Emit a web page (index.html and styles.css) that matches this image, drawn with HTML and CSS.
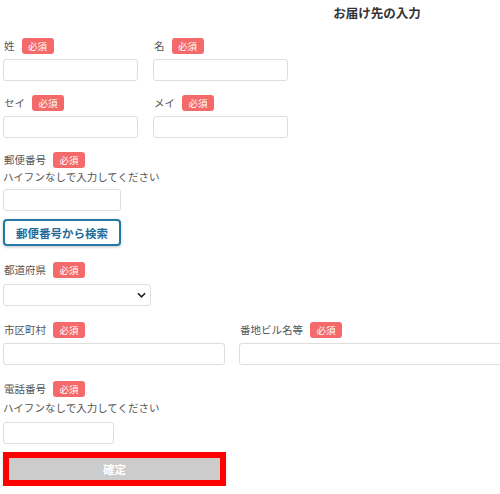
FILE: index.html
```html
<!DOCTYPE html>
<html lang="ja">
<head>
<meta charset="utf-8">
<link rel="stylesheet" href="styles.css">
</head>
<body>
<div class="form">
  <h1 class="title">お届け先の入力</h1>

  <div class="row">
    <div class="field w135">
      <div class="label">姓<span class="req">必須</span></div>
      <input class="input" type="text">
    </div>
    <div class="field w135">
      <div class="label">名<span class="req">必須</span></div>
      <input class="input" type="text">
    </div>
  </div>

  <div class="row">
    <div class="field w135">
      <div class="label">セイ<span class="req">必須</span></div>
      <input class="input" type="text">
    </div>
    <div class="field w135">
      <div class="label">メイ<span class="req">必須</span></div>
      <input class="input" type="text">
    </div>
  </div>

  <div class="field">
    <div class="label">郵便番号<span class="req">必須</span></div>
    <div class="hint">ハイフンなしで入力してください</div>
    <input class="input w118 after-hint" type="text">
    <button class="search" type="button">郵便番号から検索</button>
  </div>

  <div class="field sp">
    <div class="label">都道府県<span class="req">必須</span></div>
    <div class="select">
      <svg class="chev" viewBox="0 0 10 6" width="9" height="6"><path d="M1 1l4 4 4-4" fill="none" stroke="#222" stroke-width="1.8"/></svg>
    </div>
  </div>

  <div class="row sp2">
    <div class="field w222">
      <div class="label">市区町村<span class="req">必須</span></div>
      <input class="input" type="text">
    </div>
    <div class="field wrest">
      <div class="label">番地ビル名等<span class="req">必須</span></div>
      <input class="input" type="text">
    </div>
  </div>

  <div class="field sp2">
    <div class="label">電話番号<span class="req">必須</span></div>
    <div class="hint tel">ハイフンなしで入力してください</div>
    <input class="input w111 after-hint2" type="text">
  </div>

  <div class="confirm-wrap">
    <button class="confirm" type="button">確定</button>
  </div>
</div>
</body>
</html>
```

FILE: styles.css
```css
html, body {
  margin: 0;
  padding: 0;
  overflow: hidden;
  background: #fff;
}
body {
  font-family: "Noto Sans CJK JP", "Noto Sans", sans-serif;
  color: #555;
  font-size: 10.5px;
}
.form {
  width: 750px;
  padding: 0 3px;
  display: flex;
  flex-direction: column;
}
.title {
  margin: 0;
  height: 38px;
  padding-top: 3px;
  box-sizing: border-box;
  font-size: 12.5px;
  line-height: 20px;
  font-weight: bold;
  color: #333;
  text-align: center;
  padding-right: 2px;
}
.row {
  display: flex;
  gap: 15px;
  margin-bottom: 14px;
}
.field {
  display: flex;
  flex-direction: column;
  align-items: flex-start;
}
.label {
  height: 16px;
  display: flex;
  align-items: center;
  line-height: 16px;
  padding-left: 1px;
}
.req {
  display: inline-block;
  margin-left: 7px;
  width: 32px;
  height: 16px;
  border-radius: 3px;
  background: #f46a6a;
  color: #fff;
  font-size: 9.5px;
  line-height: 16px;
  text-align: center;
}
.input {
  margin: 5px 0 0;
  height: 22px;
  box-sizing: border-box;
  border: 1px solid #ddd;
  border-radius: 3px;
  background: #fff;
  padding: 0 4px;
  width: 100%;
  display: block;
}
.w135 { width: 135px; }
.w222 { width: 222px; }
.wrest { width: 400px; }
.input.w118 { width: 118px; }
.input.w111 { width: 111px; }
.hint {
  margin-top: 0;
  line-height: 18px;
  height: 18px;
}
.hint.tel { margin-top: 2px; }
.input.after-hint { margin-top: 3px; }
.input.after-hint2 { margin-top: 5px; }
.search {
  margin-top: 8px;
  width: 118px;
  height: 27px;
  box-sizing: border-box;
  border: 2px solid #2478a8;
  border-radius: 4px;
  background: #fff;
  color: #1f6b9a;
  font-family: inherit;
  font-weight: bold;
  font-size: 11.5px;
  padding: 0;
  box-shadow: 0 1px 3px rgba(0,0,0,0.25);
}
.field.sp { margin-top: 16px; }
.select {
  margin-top: 6px;
  width: 148px;
  height: 22px;
  box-sizing: border-box;
  border: 1px solid #ddd;
  border-radius: 3px;
  display: flex;
  align-items: center;
  justify-content: flex-end;
  padding-right: 4px;
}
.chev { display: block; }
.row.sp2 { gap: 14px; margin-bottom: 0; margin-top: 16px; }
.field.sp2 { margin-top: 16px; }
.confirm-wrap { margin-top: 8px; }
.confirm {
  width: 223px;
  height: 34px;
  box-sizing: border-box;
  border: 6px solid #ff0000;
  background: #cccccc;
  color: #fff;
  font-family: inherit;
  font-weight: bold;
  font-size: 11.5px;
  padding: 0;
  display: block;
  box-shadow: 0 2px 3px rgba(0,0,0,0.15);
}
```
